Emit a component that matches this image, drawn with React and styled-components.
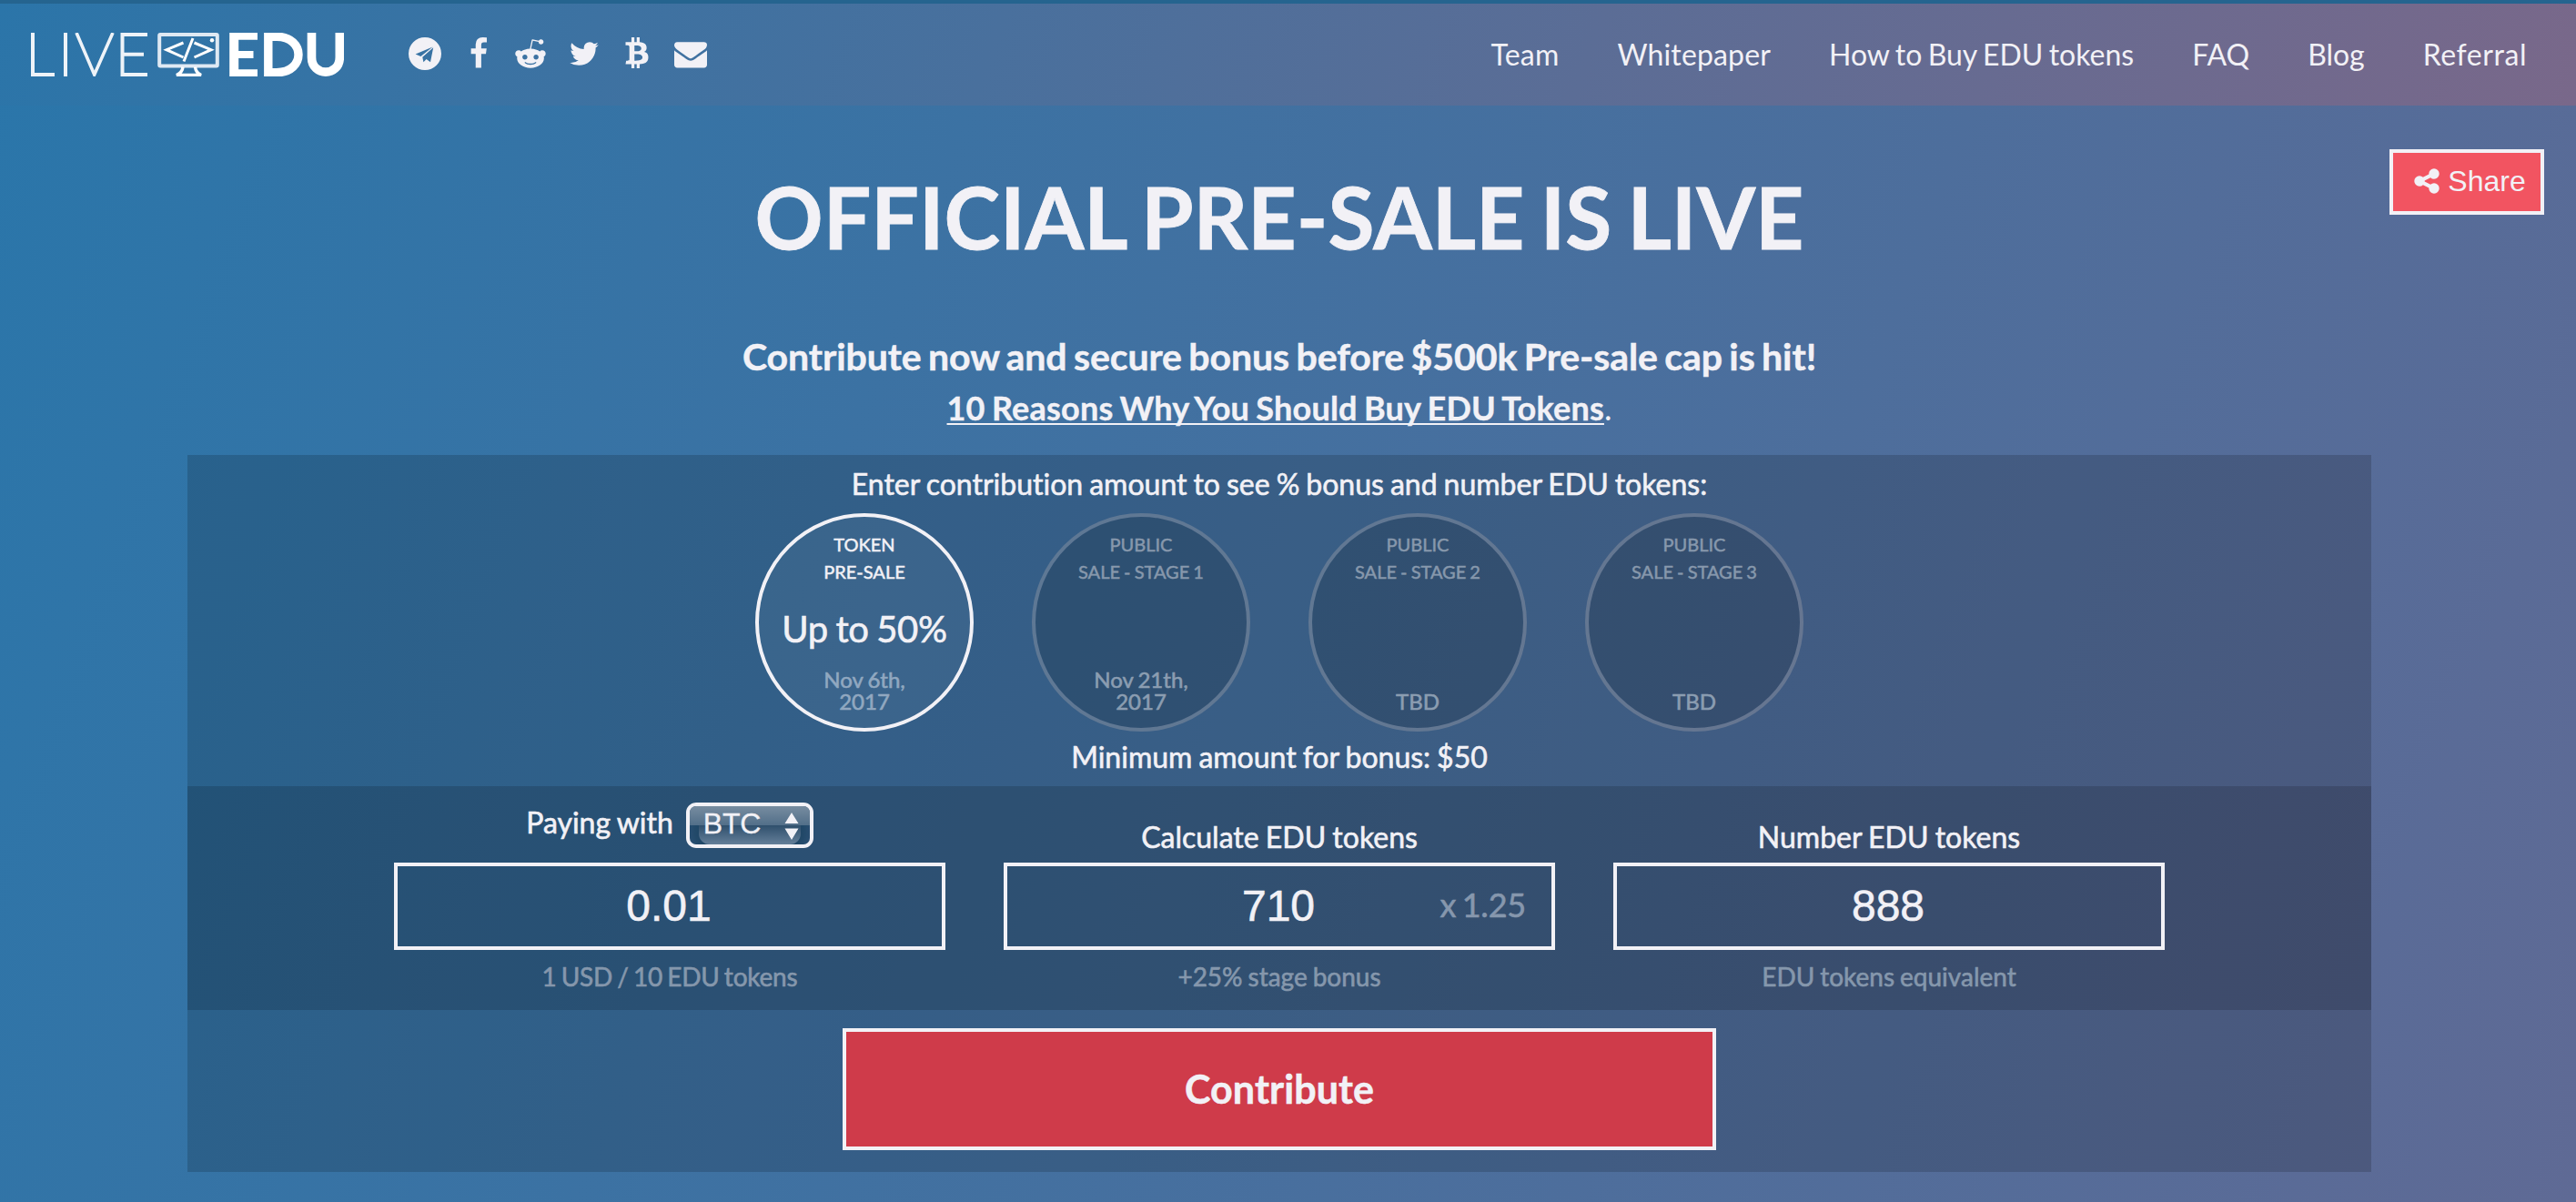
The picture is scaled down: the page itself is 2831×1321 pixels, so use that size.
import React from 'react';
import styled, { createGlobalStyle } from 'styled-components';
import { FaRedditAlien, FaBtc } from 'react-icons/fa';

const INK = '#f2f1f6';

const GlobalStyle = createGlobalStyle`
  * { box-sizing: border-box; }
  html, body { margin: 0; padding: 0; }
  body {
    font-family: Lato, sans-serif;
    font-variant-ligatures: none;
    word-spacing: -1px;
    color: ${INK};
    background: #3e71a1;
  }
`;

const Page = styled.div`
  width: 2831px;
  height: 1321px;
  overflow: hidden;
  display: flex;
  flex-direction: column;
  border-top: 4px solid #25648f;
  background: linear-gradient(110deg, #2a76aa 0%, #5f6a95 100%);
`;

const Header = styled.header`
  flex: none;
  height: 112px;
  display: flex;
  align-items: center;
  padding: 0 54px 0 34px;
  background: linear-gradient(110deg, #2b75a9 0%, #79688a 100%);
`;

const Logo = styled.svg`
  flex: none;
  width: 344px;
  height: 48px;
  margin-right: 71px;
`;

const Socials = styled.div`
  display: flex;
  align-items: center;
  margin-top: -2px;
`;

const Social = styled.a`
  display: flex;
  justify-content: center;
  width: 36px;
  height: 36px;
  margin-right: ${(p) => p.$gap}px;
  color: ${INK};
  svg { width: 36px; height: ${(p) => p.$h || 36}px; flex: none; overflow: visible; }
`;

const Nav = styled.nav`
  margin-left: auto;
  display: flex;
  gap: 64px;
`;

const NavLink = styled.a`
  font-size: 32px;
  line-height: 40px;
  letter-spacing: ${(p) => p.$ls || 0}px;
  word-spacing: -1.8px;
  white-space: nowrap;
  color: ${INK};
`;

const Main = styled.main`
  width: 2812px;
  display: flex;
  flex-direction: column;
  align-items: center;
`;

const TopRow = styled.div`
  width: 100%;
  height: 248px;
  padding: 48px 16px 0;
  display: grid;
  grid-template-columns: 170px 1fr 170px;
  align-items: start;
`;

const Title = styled.h1`
  grid-column: 2;
  margin: 18px 0 0;
  text-align: center;
  font-size: 93px;
  line-height: 112px;
  font-weight: 700;
  word-spacing: -5.4px;
  white-space: nowrap;
  -webkit-text-stroke: 0.8px ${INK};
`;

const ShareButton = styled.button`
  width: 170px;
  height: 72px;
  padding: 0 0 2px 5px;
  border: 4px solid ${INK};
  background: #f25461;
  color: ${INK};
  font: 32px/36px "Liberation Sans", Arial, sans-serif;
  display: flex;
  align-items: center;
  justify-content: center;
  gap: 7px;
  svg { width: 32px; height: 32px; }
`;

const Tagline = styled.h2`
  margin: 0;
  font-size: 41px;
  line-height: 56px;
  font-weight: 700;
  white-space: nowrap;
  letter-spacing: -0.07px;
  word-spacing: -2.5px;
  -webkit-text-stroke: 0.5px ${INK};
`;

const Reasons = styled.p`
  margin: 4px 0 0;
  height: 76px;
  font-size: 36px;
  line-height: 48px;
  font-weight: 400;
  a {
    font-weight: 700;
    letter-spacing: 0.2px;
    word-spacing: -1.7px;
    -webkit-text-stroke: 0.4px ${INK};
    text-decoration: underline;
    text-decoration-thickness: 2px;
    text-underline-offset: 3px;
    text-decoration-skip-ink: none;
  }
`;

const Panel = styled.section`
  width: 2400px;
  height: 788px;
  display: flex;
  flex-direction: column;
  align-items: center;
  background: rgba(0, 0, 0, 0.16);
`;

const Note = styled.p`
  margin: 0;
  padding-top: ${(p) => p.$top}px;
  font-size: 32px;
  line-height: 40px;
  word-spacing: -1.2px;
  -webkit-text-stroke: 0.6px ${INK};
`;

const Stages = styled.div`
  display: flex;
  gap: 64px;
  margin-top: 12px;
`;

const Stage = styled.div`
  width: 240px;
  height: 240px;
  border-radius: 50%;
  border: 4px solid ${(p) => (p.$active ? INK : 'rgba(242,241,246,0.25)')};
  background: ${(p) => (p.$active ? 'rgba(255,255,255,0.04)' : 'rgba(0,0,0,0.15)')};
  background-clip: ${(p) => (p.$active ? 'padding-box' : 'border-box')};
  display: flex;
  flex-direction: column;
  align-items: center;
  justify-content: space-between;
  padding: 15px 0 17px;
  text-align: center;
`;

const StageName = styled.div`
  font-size: 20px;
  line-height: 30px;
  color: ${(p) => (p.$active ? INK : '#8798ac')};
  -webkit-text-stroke: 0.5px currentColor;
`;

const StageBonus = styled.div`
  font-size: 40px;
  line-height: 48px;
  margin-top: 3px;
  letter-spacing: -0.3px;
  word-spacing: -1.5px;
  white-space: nowrap;
  -webkit-text-stroke: 0.6px ${INK};
`;

const StageDate = styled.div`
  width: 110px;
  font-size: 24px;
  line-height: 24px;
  color: ${(p) => (p.$active ? '#91a8c0' : '#8b9db1')};
  -webkit-text-stroke: 0.6px currentColor;
`;

const Calculator = styled.div`
  width: 100%;
  height: 246px;
  margin-top: 12px;
  display: flex;
  justify-content: center;
  gap: 64px;
  background: rgba(0, 0, 0, 0.15);
`;

const Field = styled.div`
  width: 606px;
  display: flex;
  flex-direction: column;
  align-items: center;
`;

const Label = styled.label`
  height: 84px;
  display: flex;
  align-items: flex-start;
  gap: 14px;
  padding-top: ${(p) => p.$top}px;
  font-size: 32px;
  line-height: 41px;
  -webkit-text-stroke: 0.6px ${INK};
`;

const Select = styled.span`
  position: relative;
  width: 140px;
  height: 50px;
  border: 4px solid ${INK};
  border-radius: 11px;
  margin-top: -1px;
  padding: 0 12px 5px 15px;
  display: flex;
  align-items: center;
  justify-content: space-between;
  overflow: hidden;
  font: 32px/36px "Liberation Sans", Arial, sans-serif;
  letter-spacing: -0.2px;
  -webkit-text-stroke: 0.3px ${INK};
  &::before {
    content: '';
    position: absolute;
    left: 10px;
    right: 10px;
    top: 21px;
    bottom: 0;
    border-radius: 0 0 12px 12px;
    background: linear-gradient(180deg, #2f4f6c 0, #647f99 100%);
    box-shadow: 0 0 8px 6px #204766;
  }
  &::after {
    content: '';
    position: absolute;
    left: 0;
    right: 0;
    top: 0;
    height: 21px;
    background: linear-gradient(180deg, #778ca0 0, #526f89 100%);
  }
  span, svg { position: relative; z-index: 1; }
  svg { width: 16px; height: 30px; margin-top: 6px; }
`;

const Box = styled.div`
  position: relative;
  width: 606px;
  height: 96px;
  border: 4px solid ${INK};
  display: flex;
  align-items: center;
  justify-content: center;
  padding: 0 2px 1px 0;
  font: 48px/56px "Liberation Sans", Arial, sans-serif;
  -webkit-text-stroke: 0.6px ${INK};
`;

const Multiplier = styled.span`
  position: absolute;
  right: 28px;
  top: 20px;
  font: 36px/44px Lato, sans-serif;
  letter-spacing: -0.2px;
  word-spacing: -2.5px;
  color: #8697ad;
  -webkit-text-stroke: 0.6px currentColor;
`;

const Hint = styled.p`
  margin: 10px 0 0;
  font-size: 28px;
  line-height: 38px;
  word-spacing: ${(p) => p.$ws || -1.2}px;
  letter-spacing: ${(p) => p.$ls || 0}px;
  color: #8597ac;
  -webkit-text-stroke: 0.6px currentColor;
`;

const Contribute = styled.button`
  width: 960px;
  height: 134px;
  margin-top: 20px;
  padding: 0;
  border: 4px solid ${INK};
  background: #cf3b4a;
  color: ${INK};
  font: 700 43px/50px Lato, sans-serif;
  letter-spacing: 0.1px;
  -webkit-text-stroke: 0.5px ${INK};
`;

function LogoMark() {
  return (
    <Logo viewBox="0 0 344 48" fill="none" stroke="#fff">
      <g strokeWidth="4" stroke="#eef3f8">
        <path d="M2 0V46H26" />
        <path d="M38 0V48" />
        <path d="M50 0L69.700 46L90 0" strokeWidth="3.600" />
        <path d="M128 2H100.500V46H128M100.500 23.800H124" />
      </g>
      <g stroke="#dfe9f3">
        <rect x="141.200" y="2" width="63.600" height="34.500" rx="1" strokeWidth="4" />
        <path d="M167.500 11L149 18.700L167.500 27M178 6L168 31.500M179.500 11L198 18.700L179.500 27" strokeWidth="3" stroke="#fff" />
        <path d="M167 37.500Q166.500 43.500 160 46.500H187Q181 43.500 180.500 37.500" strokeWidth="3.400" stroke="#fff" />
        <circle cx="199" cy="8.300" r="2.200" fill="#fff" stroke="none" />
      </g>
      <g>
        <path d="M223.200 0V48" strokeWidth="10" />
        <path d="M222 3.800H249M222 44.200H249M222 24H244.500" strokeWidth="7.800" />
        <path d="M260.800 4.300H270C302 4.300 302 43.700 270 43.700H260.800Z" strokeWidth="9.400" />
        <path d="M308.500 -2V27C308.500 48.500 339.300 48.500 339.300 27V-2" strokeWidth="9.600" />
      </g>
    </Logo>
  );
}

const ICONS = {
  facebook: 'M1343 12v264h-157q-86 0-116 36t-30 108v189h293l-39 296h-254v759h-306v-759h-255v-296h255v-218q0-186 104-288.500t277-102.500q147 0 228 12z',
  twitter: 'M1684 408q-67 98-162 167 1 14 1 42 0 130-38 259.500t-115.500 248.500-184.500 210.500-258 146-323 54.500q-271 0-496-145 35 4 78 4 225 0 401-138-105-2-188-64.500t-114-159.500q33 5 61 5 43 0 85-11-112-23-185.500-111.500t-73.500-205.500v-4q68 38 146 41-66-44-105-115t-39-154q0-88 44-163 121 149 294.500 238.500t371.500 99.500q-8-38-8-74 0-134 94.500-228.500t228.500-94.500q140 0 236 102 109-21 205-78-37 115-142 178 93-10 186-50z',
  envelope: 'M1792 710v794q0 66-47 113t-113 47h-1472q-66 0-113-47t-47-113v-794q44 49 101 87 362 246 497 345 57 42 92.500 65.500t94.500 48 110 24.500h2q51 0 110-24.500t94.500-48 92.500-65.500q170-123 498-345 57-39 100-87zm0-294q0 79-49 151t-122 123q-376 261-468 325-10 7-42.500 31t-54 38.500-52 32.500-57.500 27-50 9h-2q-23 0-50-9t-57.500-27-52-32.500-54-38.500-42.500-31q-91-64-262-182.500t-205-142.500q-62-42-117-115.500t-55-136.500q0-78 41.500-130t118.500-52h1472q65 0 112.500 47t47.500 113z',
  share: 'M1344 1024q133 0 226.500 93.500t93.500 226.500-93.500 226.500-226.500 93.500-226.500-93.500-93.500-226.500q0-12 2-34l-360-180q-92 86-218 86-133 0-226.500-93.500t-93.500-226.500 93.500-226.500 226.500-93.500q126 0 218 86l360-180q-2-22-2-34 0-133 93.500-226.500t226.500-93.500 226.500 93.500 93.500 226.500-93.500 226.500-226.500 93.500q-126 0-218-86l-360 180q2 22 2 34t-2 34l360 180q92-86 218-86z',
};

const Glyph = ({ name }) => (
  <svg viewBox="0 0 1792 1792" fill="currentColor"><path d={ICONS[name]} /></svg>
);

const Telegram = () => (
  <svg viewBox="0 0 36 36" fill="currentColor">
    <path
      fillRule="evenodd"
      d="M18 0A18 18 0 1 1 18 36A18 18 0 1 1 18 0ZM7.600 18.600L26.600 10.600L13.400 20.900ZM27.200 11.200L24 27.200L19.600 24L16.400 27.200L15.300 21.800Z"
    />
  </svg>
);

const STAGES = [
  { name: ['TOKEN', 'PRE-SALE'], bonus: 'Up to 50%', date: 'Nov 6th, 2017', active: true },
  { name: ['PUBLIC', 'SALE - STAGE 1'], date: 'Nov 21th, 2017' },
  { name: ['PUBLIC', 'SALE - STAGE 2'], date: 'TBD' },
  { name: ['PUBLIC', 'SALE - STAGE 3'], date: 'TBD' },
];

export default function App() {
  return (
    <>
      <GlobalStyle />
      <Page>
        <Header>
          <LogoMark />
          <Socials>
            <Social $gap={23}><Telegram /></Social>
            <Social $gap={21}><Glyph name="facebook" /></Social>
            <Social $gap={23}><FaRedditAlien /></Social>
            <Social $gap={22}><Glyph name="twitter" /></Social>
            <Social $gap={23} $h={34}><FaBtc /></Social>
            <Social $gap={0}><Glyph name="envelope" /></Social>
          </Socials>
          <Nav>
            <NavLink $ls={0.2}>Team</NavLink>
            <NavLink $ls={0.15}>Whitepaper</NavLink>
            <NavLink>How to Buy EDU tokens</NavLink>
            <NavLink>FAQ</NavLink>
            <NavLink>Blog</NavLink>
            <NavLink $ls={0.55}>Referral</NavLink>
          </Nav>
        </Header>
        <Main>
          <TopRow>
            <Title>OFFICIAL PRE-SALE IS LIVE</Title>
            <ShareButton><Glyph name="share" />Share</ShareButton>
          </TopRow>
          <Tagline>Contribute now and secure bonus before $500k Pre-sale cap is hit!</Tagline>
          <Reasons><a>10 Reasons Why You Should Buy EDU Tokens</a>.</Reasons>
          <Panel>
            <Note $top={12}>Enter contribution amount to see % bonus and number EDU tokens:</Note>
            <Stages>
              {STAGES.map((s) => (
                <Stage key={s.name[1]} $active={s.active}>
                  <StageName $active={s.active}>{s.name[0]}<br />{s.name[1]}</StageName>
                  {s.bonus && <StageBonus>{s.bonus}</StageBonus>}
                  <StageDate $active={s.active}>{s.date}</StageDate>
                </Stage>
              ))}
            </Stages>
            <Note $top={8}>Minimum amount for bonus: $50</Note>
            <Calculator>
              <Field>
                <Label $top={19}>
                  Paying with
                  <Select>
                    <span>BTC</span>
                    <svg viewBox="0 0 16 30" fill={INK}><path d="M8 0L15.500 12H.5ZM8 30L15.500 17.500H.5Z" /></svg>
                  </Select>
                </Label>
                <Box>0.01</Box>
                <Hint $ws={-1.8} $ls={-0.2}>1 USD / 10 EDU tokens</Hint>
              </Field>
              <Field>
                <Label $top={35}>Calculate EDU tokens</Label>
                <Box>710<Multiplier>x 1.25</Multiplier></Box>
                <Hint>+25% stage bonus</Hint>
              </Field>
              <Field>
                <Label $top={35}>Number EDU tokens</Label>
                <Box>888</Box>
                <Hint>EDU tokens equivalent</Hint>
              </Field>
            </Calculator>
            <Contribute>Contribute</Contribute>
          </Panel>
        </Main>
      </Page>
    </>
  );
}
